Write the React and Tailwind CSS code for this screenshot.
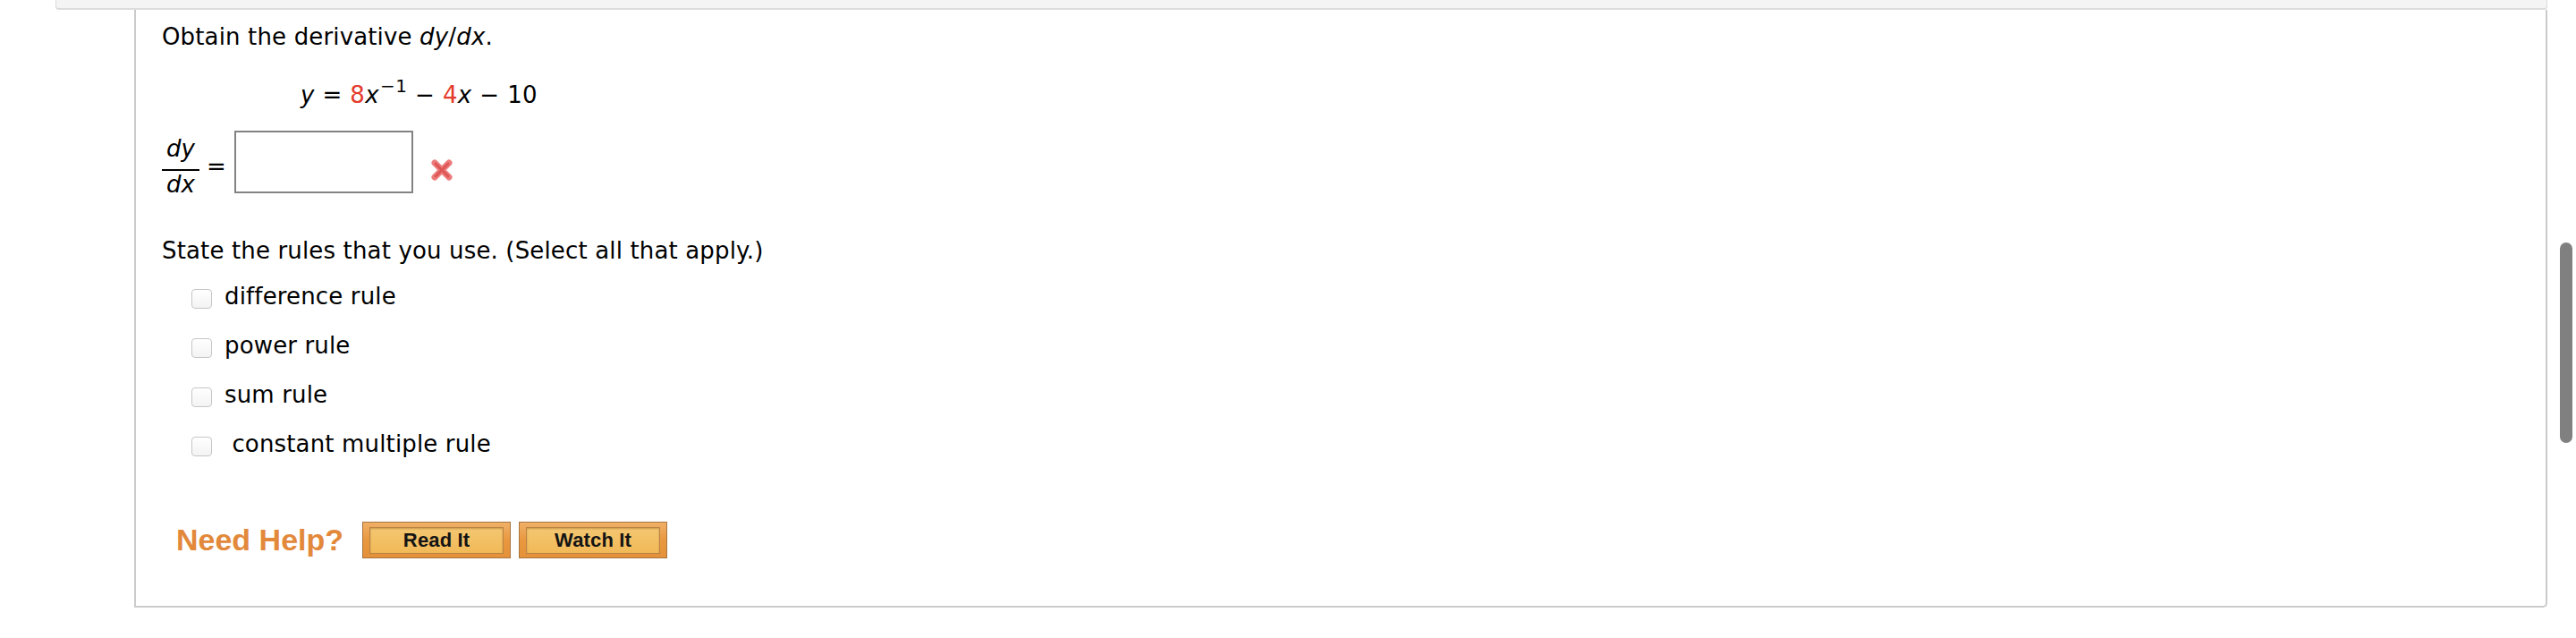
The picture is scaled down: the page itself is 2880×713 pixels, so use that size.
import React from "react";

const WrongMark = () => (
  <svg viewBox="0 0 26 26" width="26" height="26">
    <g strokeLinecap="round">
      <path d="M5 5 L21 21 M21 5 L5 21" stroke="#ed7b7b" strokeWidth="7" />
      <path d="M6 6 L20 20 M20 6 L6 20" stroke="#dd5656" strokeWidth="3" />
    </g>
  </svg>
);

const Checkbox = () => (
  <span className="mt-[7px] block h-[22px] w-[23px] shrink-0 rounded-[4px] border border-[#c6c6c6] bg-gradient-to-b from-white to-[#f3f3f3]" />
);

const HelpButton = ({ label }) => (
  <button className="h-[41px] w-[166px] border border-[#a67540] bg-gradient-to-b from-[#f0b066] via-[#e9983f] to-[#e4913a] px-[7px] pt-[5px] pb-[4px]">
    <span className="flex h-full w-full items-center justify-center border border-[#b98445] bg-gradient-to-b from-[#f4c771] to-[#f1b957] font-['Liberation_Sans',Arial,sans-serif] text-[22px] font-bold leading-none text-[#141414] shadow-[inset_0_1px_2px_rgba(150,90,30,0.45)]">
      {label}
    </span>
  </button>
);

const rules = ["difference rule", "power rule", "sum rule", "\u00a0constant multiple rule"];

export default function App() {
  return (
    <div className="relative h-[713px] w-full overflow-hidden bg-white font-['DejaVu_Sans',Verdana,sans-serif] text-[26px] leading-[30px] tracking-[0.15px] text-black">
      <div className="ml-[62px] w-[2786px]">
        {/* bottom of the previous question box */}
        <div className="h-[11px] rounded-b-[4px] border-x border-b-2 border-[#dcdcdc] bg-[#f4f4f4]" />

        {/* question panel */}
        <div className="ml-[88px] rounded-br-[5px] border-x-2 border-b-2 border-[#cbcbcb] pt-[15px] pb-[53px] pl-[29px]">
          <p>
            Obtain the derivative <i>dy</i>/<i>dx</i>.
          </p>

          <p className="mt-[35px] ml-[155px] tracking-[0.4px]">
            <i>y</i> = <span className="text-[#e53a2b]">8</span>
            <i>x</i>
            <sup className="relative top-[-12px] ml-[1px] text-[20px]">&minus;1</sup> &minus;{" "}
            <span className="text-[#e53a2b]">4</span>
            <i>x</i> &minus; 10
          </p>

          <div className="mt-[25px] flex items-start">
            <div className="mt-[7px] flex w-[42px] flex-col items-center leading-[26px]">
              <span className="w-full border-b-2 border-black pb-[10px] text-center italic">dy</span>
              <span className="pt-[2px] italic">dx</span>
            </div>
            <span className="mt-[27px] ml-[8px] leading-[26px]">=</span>
            <input
              type="text"
              className="ml-[9px] h-[70px] w-[200px] border-2 border-[#838383] bg-white outline-none"
            />
            <span className="mt-[31px] ml-[19px]">
              <WrongMark />
            </span>
          </div>

          <p className="mt-[46px]">State the rules that you use. (Select all that apply.)</p>

          <div className="mt-[21px] ml-[33px] flex flex-col gap-[25px]">
            {rules.map((r) => (
              <label key={r} className="flex items-start">
                <Checkbox />
                <span className="ml-[14px]">{r}</span>
              </label>
            ))}
          </div>

          <div className="mt-[72px] ml-[16px] flex items-start">
            <span className="font-['Liberation_Sans',Arial,sans-serif] text-[34px] font-bold leading-[41px] tracking-normal text-[#e3893b]">
              Need Help?
            </span>
            <div className="ml-[21px] flex gap-[9px]">
              <HelpButton label="Read It" />
              <HelpButton label="Watch It" />
            </div>
          </div>
        </div>
      </div>

      {/* overlay scrollbar */}
      <div className="absolute top-[271px] left-[2862px] h-[224px] w-[14px] rounded-full bg-[#808080]" />
    </div>
  );
}
